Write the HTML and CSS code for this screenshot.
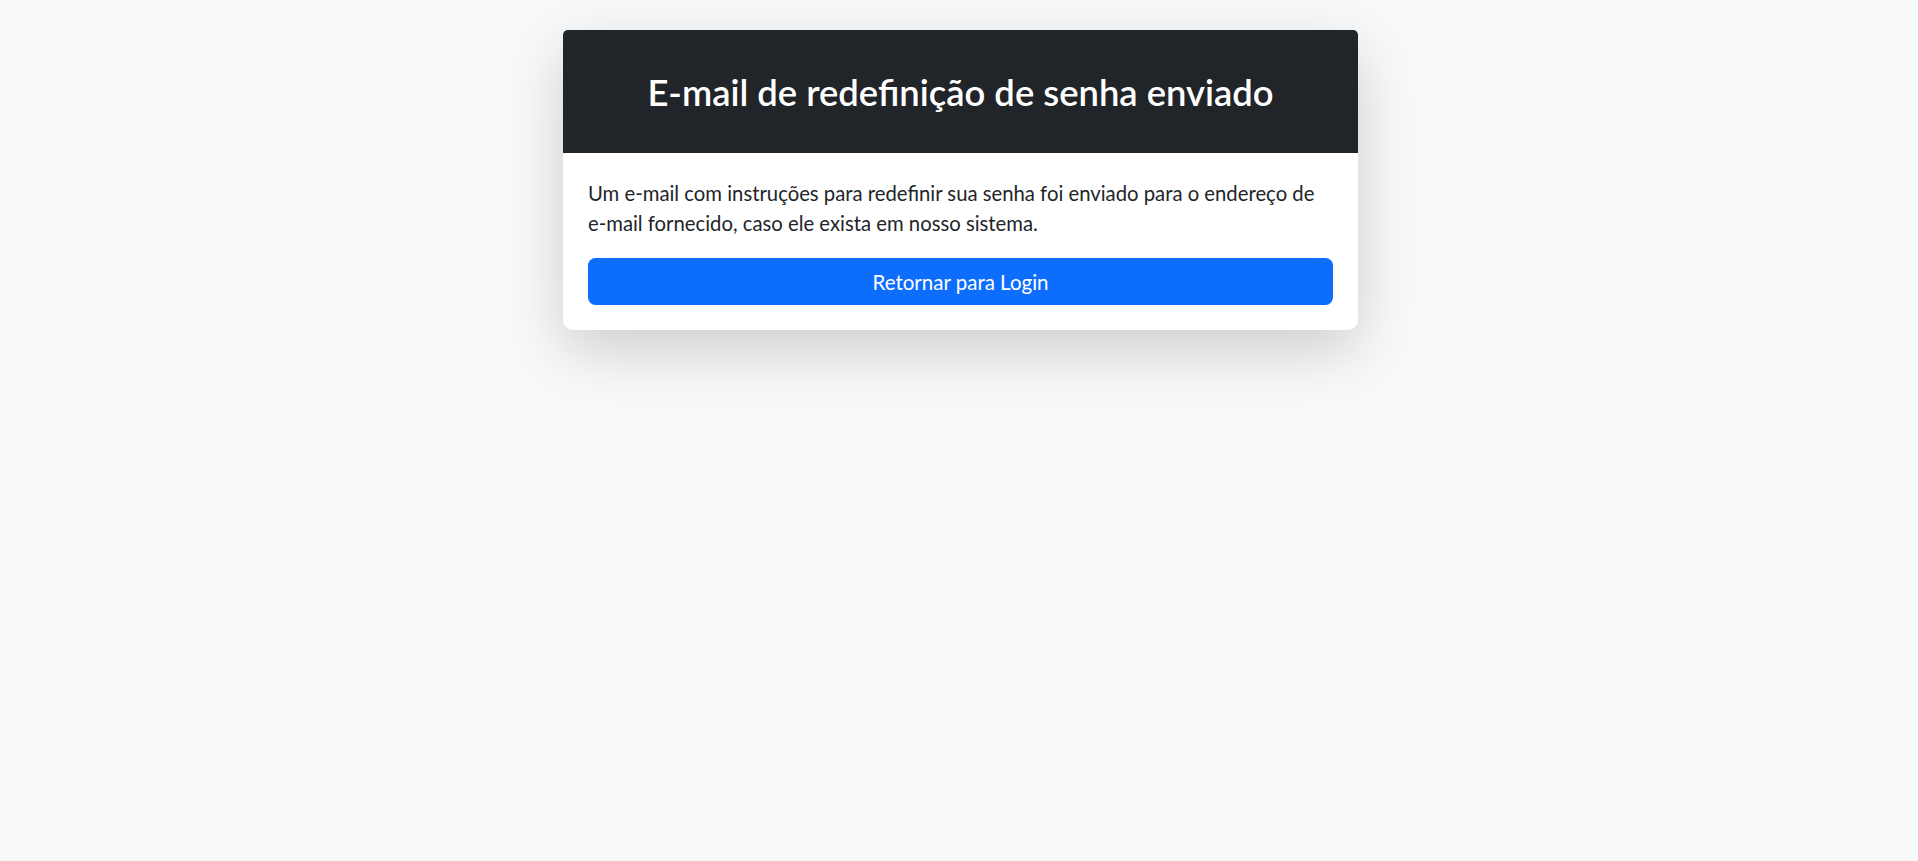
FILE: index.html
```html
<!DOCTYPE html>
<html lang="pt-BR">
<head>
<meta charset="utf-8">
<title>E-mail de redefinição de senha enviado</title>
<link rel="stylesheet" href="styles.css">
</head>
<body>
<main class="page">
  <section class="card">
    <header class="card-header">
      <h3 class="card-title">E-mail de redefinição de senha enviado</h3>
    </header>
    <div class="card-body">
      <p class="card-text">Um e-mail com instruções para redefinir sua senha foi enviado para o endereço de e-mail fornecido, caso ele exista em nosso sistema.</p>
      <a class="btn-primary" href="#">Retornar para Login</a>
    </div>
  </section>
</main>
</body>
</html>
```
FILE: styles.css
```css
* { box-sizing: border-box; }
html, body { margin: 0; padding: 0; }
body {
  background: #f8f9fa;
  color: #212529;
  font-family: "Lato", "Open Sans", sans-serif;
  min-height: 100vh;
}
.page {
  display: flex;
  justify-content: center;
  padding: 30px 0 0 3px;
}
.card {
  width: 795px;
  background: #fff;
  border-radius: 10px;
  box-shadow: 0 20px 60px rgba(0, 0, 0, 0.175);
  display: flex;
  flex-direction: column;
}
.card-header {
  background: #212529;
  color: #fff;
  border-radius: 5px 5px 0 0;
  padding: 42px 25px 41px;
  text-align: center;
}
.card-title {
  margin: 0;
  font-size: 36.4px;
  font-weight: 600;
  line-height: 40px;
}
.card-body {
  padding: 25px;
}
.card-text {
  margin: 0 0 20px;
  font-size: 20.3px;
  line-height: 30px;
}
.btn-primary {
  display: block;
  background: #0d6efd;
  color: #fff;
  text-decoration: none;
  text-align: center;
  font-size: 20.5px;
  line-height: 30px;
  padding: 8.5px 12px;
  border-radius: 7.5px;
}
```
